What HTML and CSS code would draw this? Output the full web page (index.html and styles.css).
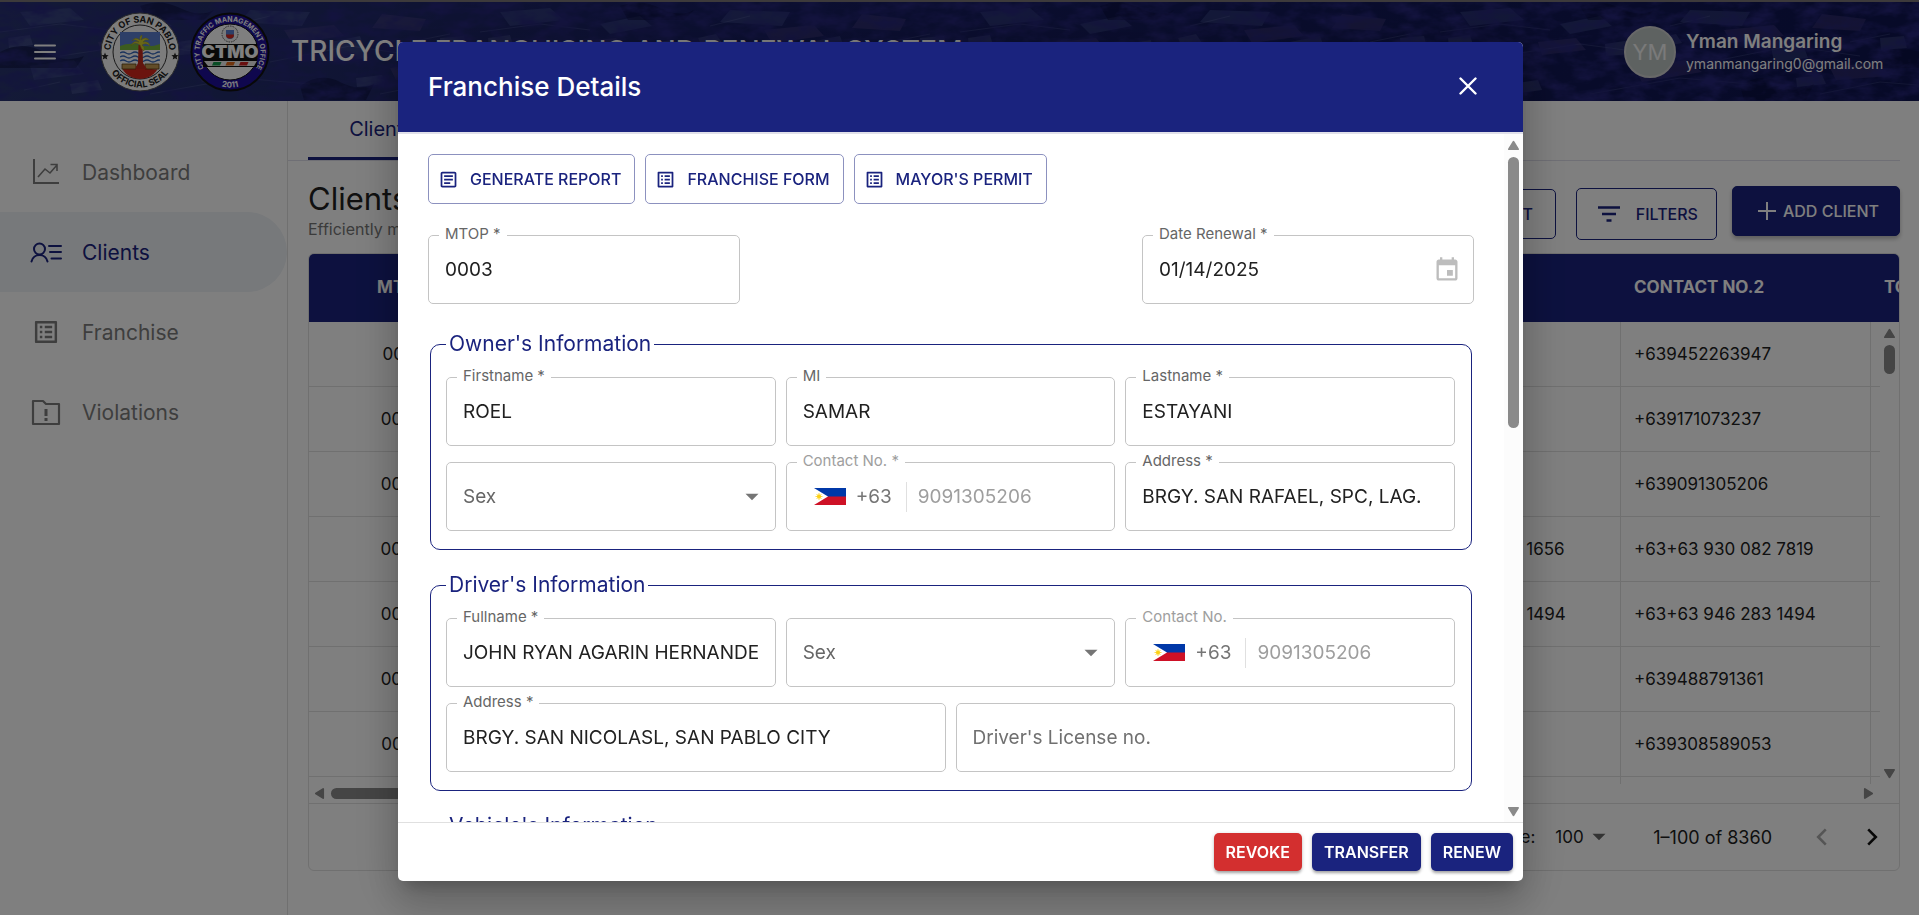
FILE: index.html
```html
<!DOCTYPE html>
<html lang="en">
<head>
<meta charset="utf-8">
<meta name="viewport" content="width=device-width, initial-scale=1">
<title>Tricycle Franchising and Renewal System</title>
<link rel="stylesheet" href="styles.css">
</head>
<body>
<svg class="sprite" aria-hidden="true">
  <symbol id="i-article" viewBox="0 0 24 24"><path fill="currentColor" d="M19 5v14H5V5h14m0-2H5c-1.100 0-2 .9-2 2v14c0 1.100.9 2 2 2h14c1.100 0 2-.9 2-2V5c0-1.100-.9-2-2-2z"/><path fill="currentColor" d="M14 17H7v-2h7v2zm3-4H7v-2h10v2zm0-4H7V7h10v2z"/></symbol>
  <symbol id="i-list" viewBox="0 0 24 24"><path fill="currentColor" d="M11 7h6v2h-6zm0 4h6v2h-6zm0 4h6v2h-6zM7 7h2v2H7zm0 4h2v2H7zm0 4h2v2H7zM20.100 3H3.900c-.5 0-.9.4-.9.9v16.200c0 .4.4.9.9.9h16.200c.4 0 .9-.5.9-.9V3.900c0-.5-.5-.9-.9-.9zM19 19H5V5h14v14z"/></symbol>
  <symbol id="i-drop" viewBox="0 0 24 24"><path fill="currentColor" d="m6 9 6 6 6-6z"/></symbol>
  <symbol id="i-tri" viewBox="0 0 14 12"><path fill="currentColor" stroke="currentColor" stroke-width="2" stroke-linejoin="round" d="M7 2 12 10H2z"/></symbol>
  <symbol id="i-flag" viewBox="0 0 32 17"><path fill="#0038a8" d="M0 0h32v9H0z"/><path fill="#ce1126" d="M0 8.500h32V17H0z"/><path fill="#fff" d="M0 0 14 8.500 0 17z"/><circle cx="5" cy="8.500" r="2" fill="#fcd116"/><path stroke="#fcd116" stroke-width=".8" d="M1.500 8.500h7M5 5v7M2.500 6l5 5M7.500 6l-5 5"/></symbol>
</svg>

<div class="app">
  <header class="topbar">
    <svg class="topbar-photo" viewBox="0 0 1919 99" preserveAspectRatio="xMidYMid slice" aria-hidden="true">
      <defs>
        <linearGradient id="sky" x1="0" x2="1"><stop offset="0" stop-color="#28346f"/><stop offset=".35" stop-color="#181f62"/><stop offset="1" stop-color="#0e1450"/></linearGradient>
        <filter id="grain" x="0" y="0" width="100%" height="100%"><feTurbulence type="fractalNoise" baseFrequency=".04 .08" numOctaves="4" seed="8"/><feColorMatrix values="0 0 0 0 .02  0 0 0 0 .02  0 0 0 0 .2  2.400 0 0 0 -.9"/></filter>
        <g id="town">
          <path fill="#5a6aa8" opacity=".3" d="M20 10l50-4 14 12-54 6zM120 22l40-8 12 10-42 8zM30 64l44-6 10 14-50 6zM250 8l60 2-8 14-62-4zM330 40l30-6 8 22-34 4z"/>
          <path fill="#5c4f92" opacity=".32" d="M98 40l38-4 10 12-44 5zM194 66l52-8 16 12-60 10zM284 28l50-5 10 11-52 7zM382 12l44 5-6 12-48-3zM390 66l42-6 18 14-54 4z"/>
          <path fill="#7783bd" opacity=".25" d="M8 36l22-3 3 10-24 3zM70 82l28-4 4 10-30 4zM165 42l26-4 2 14-27 2zM356 76l26-3 4 9-29 3zM440 36l24-2 3 12-26 2zM218 36l18-4 6 9-20 4z"/>
          <path stroke="#8792c6" stroke-width="1" opacity=".2" fill="none" d="M0 30l60-8 50 6M60 54l80-12 60 8M150 92l90-16 70 6M270 60l80-16 70 10M380 92l60-12 50 4M24 88l36-8M230 24l40-10M410 40l40-8"/>
          <path fill="#080c38" opacity=".5" d="M0 50q22-12 44 0t40 4l-8 12H0zM140 4q20-8 40 2t34 2l-10 10h-56zM300 84q20-14 40-4t34 2l-8 16h-62zM440 52q20-10 44 0l-4 14h-40z"/>
        </g>
      </defs>
      <rect width="1919" height="99" fill="url(#sky)"/>
      <use href="#town"/><use href="#town" x="480"/><use href="#town" x="960"/><use href="#town" x="1440"/>
      <rect width="1919" height="99" filter="url(#grain)"/>
    </svg>
    <button class="menu-btn" aria-label="Toggle menu"><svg viewBox="0 0 22 16"><path d="M1 1.500h20M1 8h20M1 14.500h20" stroke="currentColor" stroke-width="2" stroke-linecap="round"/></svg></button>
    <svg class="seal" viewBox="0 0 80 80" role="img" aria-label="City of San Pablo official seal">
      <defs><path id="arc1" d="M13.300 52.500a29.500 29.500 0 1 1 53.400 0"/><path id="arc2" d="M4.500 40a35.500 35.500 0 0 0 71 0"/><clipPath id="shield"><path d="M20 20h40v28a20 19 0 0 1-40 0z"/></clipPath></defs>
      <circle cx="40" cy="40" r="39" fill="#f8f8f8" stroke="#555" stroke-width="1"/><circle cx="40" cy="40" r="27" fill="none" stroke="#333" stroke-width="1"/>
      <text class="seal-text"><textPath href="#arc1" startOffset="50%">CITY OF SAN PABLO</textPath></text>
      <text class="seal-text"><textPath href="#arc2" startOffset="50%">OFFICIAL SEAL</textPath></text>
      <path d="M5 40.500l1 2.600 2.600.2-2 1.700.7 2.600L5 46.200l-2.300 1.400.7-2.600-2-1.700 2.600-.2zM75 40.500l1 2.600 2.600.2-2 1.700.7 2.600-2.300-1.400-2.300 1.400.7-2.600-2-1.700 2.600-.2z" fill="#222"/>
      <g clip-path="url(#shield)"><path fill="#5a7fd0" d="M20 20h40v16H20z"/><path fill="#78b93c" d="M20 34q10-4 20-1t20-1v6H20z"/><path fill="#fff" d="M20 38h40v18H20z"/><path d="M20 41q3-2 6 0t6 0 6 0 6 0 6 0 6 0 6 0M20 45q3-2 6 0t6 0 6 0 6 0 6 0 6 0 6 0M20 49q3-2 6 0t6 0 6 0 6 0 6 0 6 0 6 0" fill="none" stroke="#3465b8" stroke-width="1.400"/><path fill="#d6281c" d="M20 57q10-5 20-2t20 2v12H20z"/></g>
      <path d="M22 52h14v5H22zM45 52h14v5H45z" fill="#c49b52" stroke="#5a3c12" stroke-width=".8"/><path fill="#c22a1c" d="M38.500 33h4l.5 18 4 6H35l3-6z"/>
      <path d="M40 33q-6-4-9 1 2-6 8-4-5-4-7-1 3-5 8-1-1-4 2-5 0 3-1 5 5-4 8 0-4-1-6 2 6-1 7 4-4-4-8-1 3 2 2 6-3-2-4-6z" fill="#d5cf2e" stroke="#9a9a1c" stroke-width=".5"/>
    </svg>
    <svg class="seal" viewBox="0 0 80 80" role="img" aria-label="City Traffic Management Office seal">
      <defs><path id="arc3" d="M18.400 61.600a30.500 30.500 0 1 1 43.200 0"/><path id="arc4" d="M4.500 40a35.500 35.500 0 0 0 71 0"/></defs>
      <circle cx="40" cy="40" r="38.500" fill="#1e0f9c" stroke="#111" stroke-width="2"/><circle cx="40" cy="40" r="28" fill="#fff" stroke="#111" stroke-width="1"/>
      <text class="seal-text light"><textPath href="#arc3" startOffset="50%">CITY TRAFFIC MANAGEMENT OFFICE</textPath></text>
      <text class="seal-text light year"><textPath href="#arc4" startOffset="50%">2011</textPath></text>
      <circle cx="40" cy="22" r="8" fill="#f4f4f4" stroke="#555" stroke-dasharray="1.500 1"/><path d="M36 18h8v5a4 4 0 0 1-8 0z" fill="#5a7fd0"/><path d="M36 22.500h8a4 4 0 0 1-8 0z" fill="#d6281c"/>
      <path d="M13 32h54v23H13z" fill="#111"/><text class="seal-name" x="40" y="46">CTMO</text>
      <path fill="#eee" d="M14 49h53l-3 5H18z"/><path fill="#129a4a" d="M23.500 50h8l-1.500 3.500h-8z"/><path fill="#e06a1c" d="M37 50h8l-1.500 3.500h-8z"/><path fill="#d42020" d="M50.500 50h8L57 53.500h-8z"/>
    </svg>
    <h1 class="brand">TRICYCLE FRANCHISING AND RENEWAL SYSTEM</h1>
    <div class="user">
      <span class="avatar">YM</span>
      <div class="user-text"><div class="user-name">Yman Mangaring</div><div class="user-mail">ymanmangaring0@gmail.com</div></div>
    </div>
  </header>

  <div class="body">
    <nav class="side">
      <a href="#"><svg viewBox="0 0 32 32" fill="none" stroke="currentColor"><path stroke-width="2" d="M4 3v24h25"/><path stroke-width="1.600" d="M8 21l7-8 5 4 7-8M20.500 8.500H27v6.500"/></svg>Dashboard</a>
      <a href="#" class="active" aria-current="page"><svg viewBox="0 0 32 32" fill="none" stroke="currentColor" stroke-width="2" stroke-linecap="round"><circle cx="9.500" cy="13" r="5.500"/><path d="M1.500 25.500a8.200 8.200 0 0 1 16 0M19 10h12M20 16h11M21.500 22.500H31"/></svg>Clients</a>
      <a href="#"><svg viewBox="-1 -1 26 26"><use href="#i-list" width="24" height="24"/></svg>Franchise</a>
      <a href="#"><svg viewBox="0 0 32 32" fill="none" stroke="currentColor" stroke-width="2.200" stroke-linejoin="round"><path d="M3 5h10l3 3h13v20H3z"/><path stroke-width="3" d="M16 13v7M16 22v3"/></svg>Violations</a>
    </nav>

    <main class="main">
      <div class="tabs"><button class="tab">Clients</button></div>
      <div class="head">
        <div><h2>Clients</h2><p>Efficiently manage client records</p></div>
        <div class="actions">
          <button class="act report">GENERATE REPORT</button>
          <button class="act filters"><svg viewBox="0 0 24 18"><path d="M1 2.500h22M5 9h14M9.500 15.500h5" stroke="currentColor" stroke-width="2.600"/></svg>FILTERS</button>
          <button class="act add"><svg viewBox="0 0 18 18"><path d="M9 0v18M0 9h18" stroke="currentColor" stroke-width="2"/></svg>ADD CLIENT</button>
        </div>
      </div>

      <section class="grid">
        <div class="grid-head"><table>
          <colgroup><col class="c-mtop"><col class="c-mid"><col class="c-mid"><col class="c-wide"><col class="c-mid"><col class="c-mid"><col class="c-mid"></colgroup>
          <thead><tr><th class="mid">MTOP</th><th>NAME</th><th>DRIVER</th><th>ADDRESS</th><th>CONTACT</th><th>CONTACT NO.2</th><th>TODA</th></tr></thead>
        </table></div>
        <div class="grid-view">
          <div class="grid-rows"><table>
            <colgroup><col class="c-mtop"><col class="c-mid"><col class="c-mid"><col class="c-wide"><col class="c-mid"><col class="c-mid"><col class="c-mid"></colgroup>
            <tbody>
              <tr><td class="mid">0001</td><td></td><td></td><td></td><td>+639452263942</td><td>+639452263947</td><td></td></tr>
              <tr><td class="mid">0002</td><td></td><td></td><td></td><td></td><td>+639171073237</td><td></td></tr>
              <tr><td class="mid">0003</td><td></td><td></td><td></td><td></td><td>+639091305206</td><td></td></tr>
              <tr><td class="mid">0004</td><td></td><td></td><td></td><td>+63+63 930 082 1656</td><td>+63+63 930 082 7819</td><td></td></tr>
              <tr><td class="mid">0005</td><td></td><td></td><td></td><td>+63+63 946 283 1494</td><td>+63+63 946 283 1494</td><td></td></tr>
              <tr><td class="mid">0006</td><td></td><td></td><td></td><td></td><td>+639488791361</td><td></td></tr>
              <tr><td class="mid">0007</td><td></td><td></td><td></td><td>+639308589053</td><td>+639308589053</td><td></td></tr>
              <tr><td class="mid"></td><td></td><td></td><td></td><td></td><td></td><td></td></tr>
            </tbody>
          </table></div>
          <div class="vbar"><svg><use href="#i-tri"/></svg><i class="thumb short"></i><svg class="down"><use href="#i-tri"/></svg></div>
        </div>
        <div class="hbar"><svg class="left"><use href="#i-tri"/></svg><i class="hthumb"></i><svg class="right"><use href="#i-tri"/></svg></div>
        <footer class="pager">
          <label for="rows">Rows per page:</label>
          <span class="rows"><select id="rows"><option>100</option></select><svg><use href="#i-drop"/></svg></span>
          <span class="range">1–100 of 8360</span>
          <button class="page off" aria-label="Previous page" disabled><svg viewBox="0 0 24 24"><path d="M15.500 5 8.500 12l7 7" fill="none" stroke="currentColor" stroke-width="2.400"/></svg></button>
          <button class="page" aria-label="Next page"><svg viewBox="0 0 24 24"><path d="m8.500 5 7 7-7 7" fill="none" stroke="currentColor" stroke-width="2.400"/></svg></button>
        </footer>
      </section>
    </main>
  </div>
</div>

<div class="backdrop">
  <div class="dialog" role="dialog" aria-modal="true" aria-labelledby="dlg-title">
    <header class="dlg-head">
      <h2 id="dlg-title">Franchise Details</h2>
      <button class="close" aria-label="Close"><svg viewBox="0 0 18 18"><path d="m1.500 1.500 15 15m0-15-15 15" stroke="currentColor" stroke-width="2.400" stroke-linecap="round"/></svg></button>
    </header>
    <div class="dlg-body">
      <form class="form">
        <div class="tools">
          <button type="button" class="tool"><svg><use href="#i-article"/></svg>GENERATE REPORT</button>
          <button type="button" class="tool"><svg><use href="#i-list"/></svg>FRANCHISE FORM</button>
          <button type="button" class="tool"><svg><use href="#i-list"/></svg>MAYOR'S PERMIT</button>
        </div>
        <div class="top-row">
          <div class="field mtop"><label for="mtop">MTOP *</label><input id="mtop" value="0003"></div>
          <div class="field date"><label for="date">Date Renewal *</label><input id="date" value="01/14/2025"><button type="button" class="cal" aria-label="Choose date" disabled><svg viewBox="0 0 24 24"><path fill="currentColor" d="M17 12h-5v5h5v-5zM16 1v2H8V1H6v2H5c-1.110 0-1.990.9-1.990 2L3 19c0 1.100.89 2 2 2h14c1.100 0 2-.9 2-2V5c0-1.100-.9-2-2-2h-1V1h-2zm3 18H5V8h14v11z"/></svg></button></div>
        </div>

        <fieldset>
          <legend>Owner's Information</legend>
          <div class="fields three">
            <div class="field"><label for="o-first">Firstname *</label><input id="o-first" value="ROEL"></div>
            <div class="field"><label for="o-mi">MI</label><input id="o-mi" value="SAMAR"></div>
            <div class="field"><label for="o-last">Lastname *</label><input id="o-last" value="ESTAYANI"></div>
            <div class="field"><select id="o-sex" aria-label="Sex"><option>Sex</option></select><svg class="caret"><use href="#i-drop"/></svg></div>
            <div class="field phone"><label for="o-tel">Contact No. *</label><svg class="flag"><use href="#i-flag"/></svg><span class="code">+63</span><input id="o-tel" type="tel" placeholder="9091305206" disabled></div>
            <div class="field"><label for="o-addr">Address *</label><input id="o-addr" value="BRGY. SAN RAFAEL, SPC, LAG."></div>
          </div>
        </fieldset>

        <fieldset>
          <legend>Driver's Information</legend>
          <div class="fields three">
            <div class="field"><label for="d-name">Fullname *</label><input id="d-name" value="JOHN RYAN AGARIN HERNANDEZ"></div>
            <div class="field"><select id="d-sex" aria-label="Sex"><option>Sex</option></select><svg class="caret"><use href="#i-drop"/></svg></div>
            <div class="field phone"><label for="d-tel">Contact No.</label><svg class="flag"><use href="#i-flag"/></svg><span class="code">+63</span><input id="d-tel" type="tel" placeholder="9091305206" disabled></div>
          </div>
          <div class="fields two">
            <div class="field"><label for="d-addr">Address *</label><input id="d-addr" value="BRGY. SAN NICOLASL, SAN PABLO CITY"></div>
            <div class="field"><input id="d-lic" aria-label="Driver's License no." placeholder="Driver's License no."></div>
          </div>
        </fieldset>

        <fieldset>
          <legend>Vehicle's Information</legend>
        </fieldset>
      </form>
      <div class="vbar light"><svg><use href="#i-tri"/></svg><i class="thumb"></i><svg class="down"><use href="#i-tri"/></svg></div>
    </div>
    <footer class="dlg-foot">
      <button class="solid danger">REVOKE</button>
      <button class="solid">TRANSFER</button>
      <button class="solid">RENEW</button>
    </footer>
  </div>
</div>
</body>
</html>
```

FILE: styles.css
```css
:root {
  --navy: #1a237e;
  --line: #e0e0e0;
  --ink: #212121;
  --muted: #666;
}
* { box-sizing: border-box; }
body { margin: 0; font-family: Inter, "Open Sans", sans-serif; font-size: 17px; color: var(--ink); overflow: hidden; }
h1, h2, p { margin: 0; font-weight: 400; }
button, input, select { font: inherit; color: inherit; margin: 0; padding: 0; border: 0; background: none; outline: 0; }
svg { display: block; flex: none; }
.sprite { position: absolute; width: 0; height: 0; }

.app { display: flex; flex-direction: column; height: 100vh; border-top: 2px solid #7a7576; }
.topbar { position: relative; display: flex; align-items: center; height: 99px; padding: 0 29px 0 34px; color: #fff; flex: none; background: var(--navy); }
.topbar > * { position: relative; }
.topbar .topbar-photo { position: absolute; inset: 0; width: 100%; height: 100%; }
.menu-btn svg { width: 22px; height: 16px; }
.menu-btn { margin-right: 44px; }
.seal { width: 80px; height: 80px; margin-right: 10px; }
.seal-text { font: 700 9px Inter, sans-serif; text-anchor: middle; fill: #222; }
.seal-text.light { fill: #fff; font-size: 7px; }
.seal-text.year { font-size: 8px; }
.seal-name { font: 900 18px Inter, sans-serif; text-anchor: middle; fill: #fff; }
.brand { font-size: 28px; font-weight: 500; line-height: 40px; margin-left: 11px; padding-bottom: 2px; white-space: nowrap; }
.user { display: flex; align-items: center; gap: 10px; margin-left: auto; }
.user-text { min-width: 204px; }
.avatar { width: 52px; height: 52px; border-radius: 50%; border: 2px solid #d0d0d0; background: #bdc5c3; display: grid; place-items: center; font-size: 22px; color: #f4f4f4; }
.user-name { font-size: 19px; font-weight: 600; line-height: 24px; }
.user-mail { font-size: 14px; line-height: 20px; }

.body { display: flex; flex: 1; min-height: 0; }
.side { width: 288px; flex: none; border-right: 1px solid var(--line); padding-top: 31px; }
.side a { display: flex; align-items: center; gap: 20px; height: 80px; padding-left: 30px; font-size: 21px; color: #7c7c7c; text-decoration: none; }
.side svg { width: 32px; height: 32px; }
.side a.active { color: var(--navy); background: #eef2f6; border-radius: 0 40px 40px 0; }

.main { flex: 1; min-width: 0; display: flex; flex-direction: column; padding: 0 19px 44px 0; }
.tabs { height: 60px; padding-left: 20px; border-bottom: 1px solid #dedeea; flex: none; }
.tab { height: 59px; width: 147px; color: var(--navy); font-size: 20px; border-bottom: 3px solid var(--navy); }
.head { display: flex; justify-content: space-between; height: 92px; padding-left: 20px; flex: none; }
.head h2 { font-size: 31px; line-height: 40px; padding-top: 18px; }
.head p { font-size: 16px; line-height: 20px; color: #777; }
.actions { display: flex; align-items: center; gap: 15px; padding-top: 14px; }
.act { display: flex; align-items: center; gap: 15px; height: 52px; padding: 0 20px; border: 1px solid var(--navy); border-radius: 5px; color: var(--navy); font-size: 16px; font-weight: 500; }
.act.report { height: 50px; padding: 0 22px; margin-right: 5px; }
.act.filters { padding: 0 18px 0 20px; }
.filters svg { width: 24px; height: 18px; }
.act.add { gap: 7px; height: 50px; margin-bottom: 6px; padding: 0 20px 0 25px; background: var(--navy); color: #fff; box-shadow: 0 3px 4px #0004; }
.add svg { width: 18px; height: 18px; }

.grid { flex: 1; min-height: 0; display: flex; flex-direction: column; margin-left: 20px; border: 1px solid var(--line); border-radius: 6px; overflow: hidden; }
.grid table { table-layout: fixed; width: 1812px; border-collapse: separate; border-spacing: 0; }
.c-mtop { width: 187px; } .c-mid { width: 250px; } .c-wide { width: 375px; }
.grid-head { background: var(--navy); color: #fff; flex: none; overflow: hidden; }
th { height: 68px; padding: 0 13px 2px; text-align: left; font-weight: 700; font-size: 17px; }
td { height: 65px; padding: 0 13px; border-right: 1px solid var(--line); border-bottom: 1px solid var(--line); font-size: 17px; white-space: nowrap; }
th.mid, td.mid { text-align: center; }
.grid-view { display: flex; flex: 1; min-height: 0; }
.grid-rows { flex: 1; min-width: 0; overflow: hidden; }
.vbar { width: 19px; flex: none; display: flex; flex-direction: column; align-items: center; padding: 6px 0 5px; color: #8a8a8a; }
.vbar svg { width: 13px; height: 11px; }
.vbar .down { transform: rotate(180deg); margin-top: auto; }
.thumb { width: 11px; height: 40%; margin-top: 6px; border-radius: 6px; background: #8a8a8a; }
.thumb.short { height: 29px; }
.vbar.light { background: #fcfcfc; }
.hbar { display: flex; align-items: center; height: 19px; padding: 0 24px 0 4px; color: #8a8a8a; flex: none; }
.hbar svg { width: 13px; height: 11px; }
.hbar .left { transform: rotate(-90deg); }
.hbar .right { transform: rotate(90deg); margin-left: auto; }
.hthumb { width: 40%; height: 11px; margin-left: 5px; border-radius: 6px; background: #8a8a8a; }
.pager { height: 67px; flex: none; display: flex; align-items: center; justify-content: flex-end; padding-right: 14px; border-top: 1px solid var(--line); }
.rows { display: flex; align-items: center; margin: 0 41px 0 20px; }
.rows select { appearance: none; }
.rows svg { width: 26px; height: 26px; color: #666; margin-left: 2px; }
.range { font-size: 18px; margin-right: 37px; }
.page { color: #111; margin-left: 24px; }
.page.off { color: #aaa; margin-left: 0; }
.page svg { width: 26px; height: 26px; }

.backdrop { position: fixed; inset: 0; display: flex; justify-content: center; padding: 42px 32px 34px 34px; background: rgba(0, 0, 0, .5); }
.dialog { width: 100%; max-width: 1125px; display: flex; flex-direction: column; overflow: hidden; background: #fff; border-radius: 5px; box-shadow: 0 11px 15px -7px rgba(0,0,0,.2), 0 24px 38px 3px rgba(0,0,0,.14), 0 9px 46px 8px rgba(0,0,0,.12); }
.dlg-head { height: 92px; flex: none; display: flex; align-items: center; justify-content: space-between; padding: 0 46px 2px 30px; background: var(--navy); color: #fff; border-bottom: 2px solid #e0e0ea; }
.dlg-head h2 { font-size: 26px; font-weight: 500; }
.close svg { width: 18px; height: 18px; }
.dlg-body { flex: 1; min-height: 0; display: flex; }
.form { flex: 1; min-width: 0; overflow: hidden; padding: 20px 30px; }
.tools { display: flex; gap: 10px; }
.tool { display: flex; align-items: center; gap: 11px; height: 50px; padding: 0 13px 0 9px; border: 1px solid #8c91bf; border-radius: 5px; color: var(--navy); font-size: 16px; font-weight: 500; white-space: nowrap; }
.tool svg { width: 21px; height: 21px; }
.top-row { display: flex; justify-content: space-between; margin: 31px 0 25px; }
.mtop { width: 312px; }
.date { width: 332px; }

fieldset { min-width: 0; margin: 0 2px 20px; padding: 18px 16px 18px 15px; border: 1px solid var(--navy); border-radius: 10px; }
legend { padding: 0 3px; font-size: 21px; line-height: 30px; color: var(--navy); }
.fields { display: grid; gap: 16px 10px; }
.fields + .fields { margin-top: 16px; }
.three { grid-template-columns: repeat(3, 1fr); }
.two { grid-template-columns: repeat(2, 1fr); }
.field { position: relative; display: flex; align-items: center; height: 69px; padding: 0 16px; border: 1px solid #c4c4c4; border-radius: 5px; font-size: 19px; }
.field label { position: absolute; top: -12px; left: 10px; padding: 0 6px; background: #fff; font-size: 15px; line-height: 20px; color: var(--muted); }
.field input { flex: 1; width: 100%; min-width: 0; height: 32px; }
.field input::placeholder { color: #707070; opacity: 1; }
.field select { flex: 1; appearance: none; color: var(--muted); }
.caret { position: absolute; right: 10px; width: 26px; height: 26px; color: #757575; pointer-events: none; }
.cal { color: #bdbdbd; margin-right: -4px; }
.cal svg { width: 28px; height: 28px; }
.phone { padding-left: 27px; }
.field.phone label, .field.phone input::placeholder { color: #9e9e9e; }
.flag { width: 32px; height: 17px; }
.code { margin-left: 10px; padding-right: 14px; line-height: 30px; color: #757575; border-right: 1px solid var(--line); }
.phone input { padding-left: 11px; }

.dlg-foot { height: 59px; flex: none; display: flex; align-items: center; justify-content: flex-end; gap: 10px; padding: 0 10px; border-top: 1px solid var(--line); }
.solid { height: 38px; padding: 0 12px; border-radius: 5px; background: var(--navy); color: #fff; font-size: 16px; font-weight: 600; box-shadow: 0 3px 3px -1px #0004, 0 1px 4px #0003; }
.solid.danger { background: #d32f2f; }
```
